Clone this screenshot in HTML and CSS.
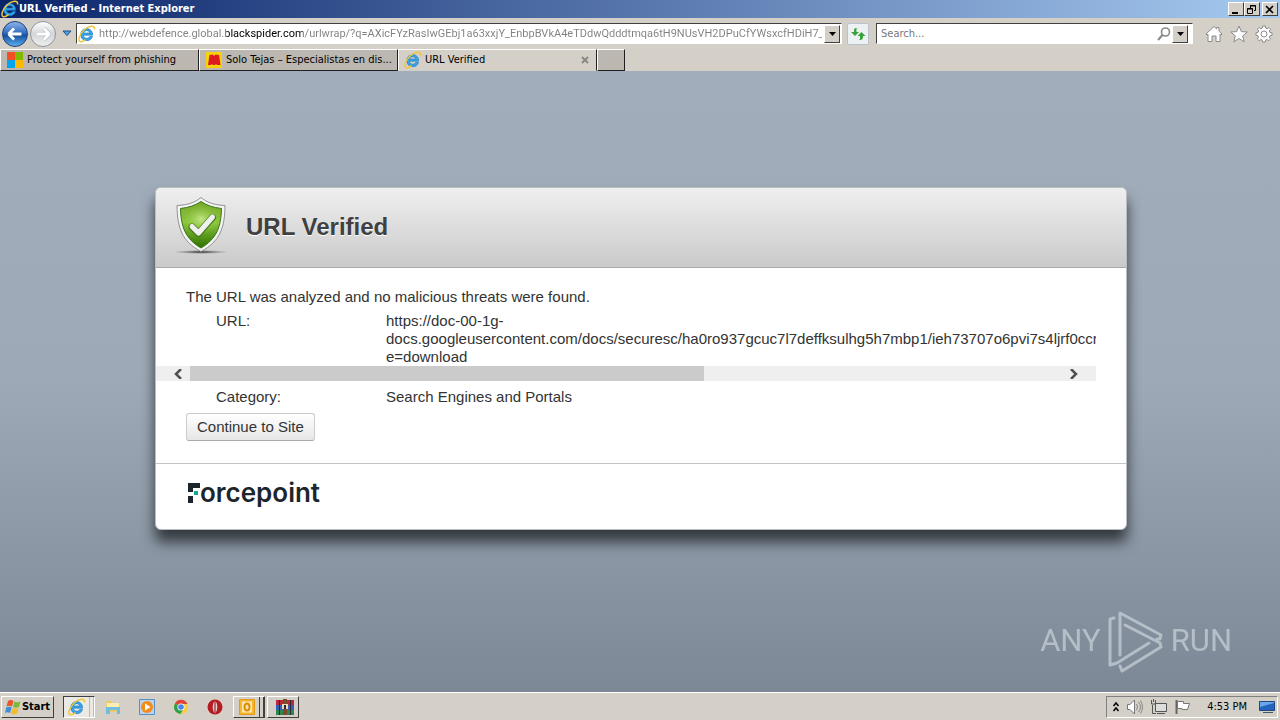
FILE: index.html
```html
<!DOCTYPE html>
<html lang="en">
<head>
    <meta charset="UTF-8">
    <title>URL Verified</title>
    <link rel="stylesheet" href="styles.css">
</head>
<body>
    <!-- shared icon -->
    <svg class="defs" width="0" height="0">
        <symbol id="ie" viewBox="0 0 18 18">
            <path d="M14.6 10.2H5.4c.2 3.5 5.2 4 6.2 1.3h2.9c-1.2 6-11.7 5.6-11.8-1.8C2.700 1.500 14.900 1.400 14.600 10.200zM5.600 8h6.200C11.500 4.900 6 4.900 5.600 8z" fill="#35a5e8" stroke="#1676c0" stroke-width=".6"/>
            <path d="M16.500 4.500C17.500-.5 10.500.5 6 5 1.500 9.300-.4 15.500 2 16.600c1.500.6 4-.8 5.500-2" fill="none" stroke="#f0c63c" stroke-width="1.500"/>
        </symbol>
    </svg>

    <div class="titlebar">
        <svg class="icon"><use href="#ie"/></svg>
        <span class="window-title">URL Verified - Internet Explorer</span>
        <div class="window-buttons">
            <button aria-label="Minimize"><svg width="10" height="9"><path d="M1 7h6v2H1z"/></svg></button>
            <button aria-label="Restore"><svg width="10" height="9"><path d="M3.500 3V.5h5v5H7M3 1h6M.5 3.500h5v5h-5zM0 4h6" fill="none" stroke="#000"/></svg></button>
            <button class="close" aria-label="Close"><svg width="10" height="9"><path d="M1 1l7 7M8 1L1 8" stroke="#000" stroke-width="1.600"/></svg></button>
        </div>
    </div>

    <div class="navbar">
        <button class="round back" aria-label="Back"><svg viewBox="0 0 26 26"><path d="M6 13l6-6M6 13l6 6M6 13h14" fill="none" stroke="#fff" stroke-width="3"/></svg></button>
        <button class="round forward" aria-label="Forward"><svg viewBox="0 0 26 26"><path d="M20 13l-6-6M20 13l-6 6M20 13H6" fill="none" stroke="#b5b9bf" stroke-width="4.500"/><path d="M20 13l-6-6M20 13l-6 6M20 13H6" fill="none" stroke="#fff" stroke-width="3"/></svg></button>
        <button class="recent" aria-label="Recent pages"><svg width="10" height="7"><path d="M1 1h8L5 5.500z" fill="#4aa3e0" stroke="#1d4f86"/></svg></button>
        <div class="field address">
            <svg class="icon"><use href="#ie"/></svg>
            <input class="url" type="text" aria-label="Address" value="http://webdefence.global.blackspider.com/urlwrap/?q=AXicFYzRasIwGEbj1a63xxjY_EnbpBVkA4eTDdwQdddtmqa6tH9NUsVH2DPuCfYWsxcfHDiH7_6O_">
            <button class="drop" aria-label="Show history"><svg width="7" height="4"><path d="M0 0h7L3.500 4z"/></svg></button>
        </div>
        <button class="refresh" aria-label="Refresh"><svg width="16" height="16"><path d="M7 2c-3 0-3 1-3 4H1l4 4 4-4H6.500C6.500 4 6 3 7 2zM9 14c3.500 0 4-1 4-4h2.500L11.500 6 7.500 10H10c0 2 .5 3-1 4z" fill="#37a33b"/></svg></button>
        <div class="field search">
            <input type="text" aria-label="Search" placeholder="Search...">
            <button class="lens" aria-label="Go"><svg width="14" height="14"><circle cx="8.500" cy="5" r="4" fill="none" stroke="#888" stroke-width="1.600"/><path d="M5.500 8L1 13" stroke="#888" stroke-width="2"/></svg></button>
            <button class="drop" aria-label="Search options"><svg width="7" height="4"><path d="M0 0h7L3.500 4z"/></svg></button>
        </div>
        <div class="tools">
            <button aria-label="Home"><svg viewBox="0 0 18 18"><path d="M1 9l8-7.500 2.500 2.400V2.500H14v3.700L17 9l-1 1-1-.8V16.500h-4V11H7v5.500H3V9.200L2 10z"/></svg></button>
            <button aria-label="Favorites"><svg viewBox="0 0 18 18"><path d="M9 1l2.300 5.600 6 .4-4.600 3.900 1.500 5.900L9 13.500l-5.200 3.300 1.500-5.900L.7 7l6-.4z"/></svg></button>
            <button aria-label="Tools"><svg viewBox="0 0 18 18"><path d="M7.600 1h2.800l.4 2.200 1.300.5L14 2.500l1.600 1.600-1.300 1.800.6 1.500L17 7.700v2.600l-2.100.5-.6 1.400 1.200 1.800-1.700 1.700-1.800-1.200-1.400.6-.4 2.100H7.700l-.4-2.100-1.400-.6-1.800 1.200-1.700-1.700 1.200-1.800-.6-1.400L1 10.300V7.700l2.100-.4.6-1.400-1.200-1.800 1.600-1.600 1.800 1.200 1.300-.5z"/><circle cx="9" cy="9" r="3"/></svg></button>
        </div>
    </div>

    <div class="tabs">
        <button class="tab">
            <svg class="icon" viewBox="0 0 18 18"><path d="M1 1h8v8H1z" fill="#f25022"/><path d="M9 1h8v8H9z" fill="#7fba00"/><path d="M1 9h8v8H1z" fill="#00a4ef"/><path d="M9 9h8v8H9z" fill="#ffb900"/></svg>
            <span>Protect yourself from phishing</span>
        </button>
        <button class="tab">
            <svg class="icon" viewBox="0 0 18 18"><path d="M1 1h16v16H1z" fill="#f5d20c"/><path d="M3 14L4.500 4 8 3.500 9 5l1.500-1.500L14 4l1.500 10H12l-1-1-1 1H8l-1-1-1 1z" fill="#dc1c20"/></svg>
            <span>Solo Tejas – Especialistas en dis...</span>
        </button>
        <button class="tab active">
            <svg class="icon"><use href="#ie"/></svg>
            <span>URL Verified</span>
            <svg class="tab-close" width="8" height="8"><path d="M1 1l6 6M7 1L1 7" stroke="#8b8782" stroke-width="2"/></svg>
        </button>
        <button class="new-tab" aria-label="New tab"></button>
    </div>

    <main class="page">
        <div class="card">
            <div class="card-header">
                <svg class="shield" viewBox="0 0 60 60">
                    <defs>
                        <linearGradient id="green" x1="0" y1="0" x2="0" y2="1">
                            <stop offset="0" stop-color="#76a72c"/>
                            <stop offset=".45" stop-color="#8cc63c"/>
                            <stop offset="1" stop-color="#2e7000"/>
                        </linearGradient>
                        <radialGradient id="glow"><stop offset="0" stop-color="#d2ee9a" stop-opacity=".8"/><stop offset="1" stop-color="#8cc63c" stop-opacity="0"/></radialGradient>
                        <radialGradient id="ground"><stop offset="0" stop-color="#222"/><stop offset="1" stop-color="#777" stop-opacity="0"/></radialGradient>
                    </defs>
                    <ellipse cx="30" cy="55" rx="28" ry="2" fill="url(#ground)"/>
                    <path d="M30 .5c6 5 13 7.500 24 8-.2 22-5 36-24 46C11 44.500 6.200 30.500 6 8.500c11-.5 18-3 24-8z" fill="#f4f4f4" stroke="#919191"/>
                    <path d="M30 4.500c6 4 12 6 20.500 7C50 30 45.500 42 30 51 14.500 42 10 30 9.500 11.500 18 10.500 24 8.500 30 4.500z" fill="url(#green)" stroke="#397416"/>
                    <ellipse cx="30" cy="22" rx="18" ry="15" fill="url(#glow)"/>
                    <path d="M21 30l6.500 6.500L41.500 20.500" fill="none" stroke="#467d1e" stroke-width="7" stroke-linecap="round" stroke-linejoin="round"/>
                    <path d="M21 29.500l6.500 6.500L41.500 20" fill="none" stroke="#f0f0f0" stroke-width="5" stroke-linecap="round" stroke-linejoin="round"/>
                </svg>
                <h1>URL Verified</h1>
            </div>
            <div class="card-body">
                <p>The URL was analyzed and no malicious threats were found.</p>
                <dl class="row url-row">
                    <dt>URL:</dt>
                    <dd>https://doc-00-1g-<br>docs.googleusercontent.com/docs/securesc/ha0ro937gcuc7l7deffksulhg5h7mbp1/ieh73707o6pvi7s4ljrf0ccr<br>e=download</dd>
                </dl>
                <div class="scrollbar">
                    <button aria-label="Scroll left"><svg width="10" height="10"><path d="M8 0L3 5l5 5" fill="none" stroke="#505050" stroke-width="2.500"/></svg></button>
                    <div class="track"><div class="thumb"></div></div>
                    <button aria-label="Scroll right"><svg width="10" height="10"><path d="M2 0l5 5-5 5" fill="none" stroke="#505050" stroke-width="2.500"/></svg></button>
                </div>
                <dl class="row">
                    <dt>Category:</dt>
                    <dd>Search Engines and Portals</dd>
                </dl>
                <button class="continue">Continue to Site</button>
            </div>
            <div class="card-footer">
                <div class="brand">
                    <svg width="12" height="20"><path d="M0 0h13v5H5v4H0zM0 13h5v7H0z" fill="#1d252c"/><path d="M6 8h4v4H6z" fill="#14a890"/></svg>
                    <span>orcepoint</span>
                </div>
            </div>
        </div>

        <div class="watermark">
            <span>ANY</span>
            <svg viewBox="0 0 58 64" width="58" height="64">
                <path d="M7 9l-4 1v46l7-2 32-20M13 46V4l41 22-1 4h-3M13 57l2 5 39-24-1-4-35-18" fill="none" stroke="#c3cad3" stroke-width="3" stroke-linejoin="round" stroke-linecap="round"/>
            </svg>
            <span>RUN</span>
        </div>
    </main>

    <div class="taskbar">
        <button class="start">
            <svg width="17" height="16"><path d="M3 2c2-1.500 4-1 5.500 0L7 7.500C5 6.500 3.500 6.500 1.500 7.500z" fill="#e8562a"/><path d="M9.500 2.500c2 1 4 1 6 0L14 8c-2 1-4 1-6 0z" fill="#7db83a"/><path d="M1.200 8.500c2-1 3.800-1 5.500 0L5 14c-2-1-3.500-1-5 0z" fill="#3b8ed8"/><path d="M7.700 9c2 1 4 1 6 0L12 14.500c-2 1-4 1-6 0z" fill="#f4bc2c"/></svg>
            Start
        </button>
        <button class="task pressed" aria-label="Internet Explorer"><svg class="icon"><use href="#ie"/></svg><i></i><i></i></button>
        <button class="quick" aria-label="Explorer"><svg viewBox="0 0 18 18"><path d="M2 3h5l1 2h7v9H2z" fill="#e9c968"/><path d="M3 5h12v7H3z" fill="#fbeeb0"/><path d="M2 9h14v7h-3v-4H6v4H2z" fill="#72bce0"/></svg></button>
        <button class="quick" aria-label="Media Player"><svg viewBox="0 0 18 18"><path d="M1.500 1.500h15v15h-15z" fill="#b8d4ee" stroke="#588fc6"/><circle cx="9" cy="9" r="6" fill="#f28c1c"/><path d="M7 5.500L12.500 9 7 12.500z" fill="#fff"/></svg></button>
        <button class="quick" aria-label="Chrome"><svg viewBox="0 0 18 18"><circle cx="9" cy="9" r="7" fill="#f9cd3c"/><path d="M9 9L2.900 5.500A7 7 0 0 1 15.500 6H9z" fill="#e04438"/><path d="M9 9L3 5.400A7 7 0 0 0 8.500 16L11.500 11z" fill="#2da04f"/><circle cx="9" cy="9" r="3.600" fill="#fff"/><circle cx="9" cy="9" r="2.800" fill="#4486ee"/></svg></button>
        <button class="quick" aria-label="Opera"><svg viewBox="0 0 18 18"><circle cx="9" cy="9" r="7.500" fill="#b71a20"/><ellipse cx="9" cy="9" rx="2.300" ry="5.500" fill="#e5cfcc"/><path d="M8.500 4h1v10h-1z" fill="#811015"/></svg></button>
        <button class="task outlook" aria-label="Outlook"><svg class="icon" viewBox="0 0 18 18"><path d="M1.500 1.500h15v15h-15z" fill="#f5b52c" stroke="#e29a17"/><path d="M4 3.500h10v11H4z" fill="#fbe9b3"/><ellipse cx="9" cy="9" rx="2.500" ry="3.500" fill="none" stroke="#e08c00" stroke-width="2"/></svg><i></i><i></i></button>
        <button class="task" aria-label="WinRAR"><svg class="icon" viewBox="0 0 18 18"><path d="M0 2h18v5H0z" fill="#b52a3a"/><path d="M0 7h18v5H0z" fill="#365fb0"/><path d="M0 12h18v5H0z" fill="#2f8651"/><path d="M7 1h4v16H7z" fill="#7c4b2a"/><path d="M6 6h6v5H6z" fill="#e6ddbd"/><path d="M8 7h2v4H8zM3 2h1v15H3zM14 2h1v15h-1z" fill="#30263a"/></svg></button>
        <div class="tray">
            <svg width="8" height="12"><path d="M1.500 5L4 2l2.500 3M1.500 10L4 7l2.500 3" fill="none" stroke="#000" stroke-width="1.500"/></svg>
            <svg width="18" height="16"><path d="M1.500 5.500H4L8.500 1v14L4 10.500H1.500z" fill="#fff" stroke="#777"/><path d="M10.500 5q2 3 0 6M12.500 3q4 5 0 10M14.500 1.500q4 6.500 0 13" fill="none" stroke="#888"/></svg>
            <svg width="18" height="16"><path d="M5.500 4.500h11v8h-11z" fill="#ddd" stroke="#555"/><path d="M7 14.500h8M2.500 6v8.500H6M1.500 1v4h4V1M3.500 0v3" fill="none" stroke="#555"/></svg>
            <svg width="18" height="16"><path d="M2.500 1v14" stroke="#666" stroke-width="2"/><path d="M3.500 2.500h6v2h6l-2 6H8v-1H3.500z" fill="#fff" stroke="#777"/></svg>
            <time>4:53 PM</time>
            <svg width="16" height="14"><path d="M.5 1.500h15v9H.5z" fill="#2563bd" stroke="#214780"/><path d="M1 7l14-4V2H1z" fill="#69a7e8"/><path d="M4 12h10v1H4z" fill="#456"/></svg>
        </div>
    </div>
</body>
</html>
```

FILE: styles.css
```css
* {
    box-sizing: border-box;
}
body {
    margin: 0;
    height: 100vh;
    display: flex;
    flex-direction: column;
    overflow: hidden;
    background: #d4d0c8;
    color: #000;
    font: 11px/14px "DejaVu Sans Condensed", "DejaVu Sans", sans-serif;
}
button, input {
    font: inherit;
    color: inherit;
    margin: 0;
    padding: 0;
    border: none;
    background: none;
}
button {
    display: flex;
    align-items: center;
    justify-content: center;
    flex-shrink: 0;
    white-space: nowrap;
}
svg {
    flex-shrink: 0;
}
.defs {
    position: absolute;
}
.icon {
    width: 18px;
    height: 18px;
}

/* title bar */
.titlebar {
    display: flex;
    align-items: center;
    height: 18px;
    flex-shrink: 0;
    padding: 0 2px 0 1px;
    background: linear-gradient(90deg, #0a246a, #a6caf0);
    color: #fff;
    font-weight: bold;
}
.window-title {
    flex: 1;
}
.window-buttons {
    display: flex;
}
.window-buttons button {
    width: 16px;
    height: 14px;
    background: #d4d0c8;
    border: 1px solid;
    border-color: #fff #404040 #404040 #fff;
}
.window-buttons .close {
    margin-left: 2px;
}

/* navigation */
.navbar {
    display: flex;
    align-items: center;
    height: 30px;
    flex-shrink: 0;
    padding: 0 7px 0 2px;
    border-top: 1px solid #d4d0c8;
}
.round {
    width: 26px;
    height: 26px;
    border-radius: 50%;
    margin-right: 2px;
    border: 1px solid #8f969f;
    background: linear-gradient(#fff, #d3d6da 50%, #eee);
}
.back {
    border-color: #1d3f75;
    background: linear-gradient(#8bb4e8, #2a66bd 50%, #174d9f 55%, #58b0ec);
}
.recent {
    width: 18px;
    height: 20px;
}
.field {
    display: flex;
    align-items: center;
    height: 21px;
    background: #fff;
    border: 1px solid;
    border-color: #404040 #fff #fff #404040;
}
.field input {
    flex: 1;
    min-width: 0;
    outline: none;
}
.address {
    flex: 5 1 766px;
    padding: 0 1px;
}
/* the domain stands out from the rest of the address */
.field .url {
    margin: 0 2px 0 3px;
    color: transparent;
    font-family: Roboto, sans-serif;
    background: linear-gradient(90deg, #808080 127px, #000 127px, #000 204px, #808080 204px);
    -webkit-background-clip: text;
    background-clip: text;
}
.drop {
    width: 16px;
    height: 18px;
    background: #d4d0c8;
    border: 1px solid;
    border-color: #fff #404040 #404040 #fff;
}
.refresh {
    width: 22px;
    height: 22px;
    margin: 0 7px 0 5px;
    background: #eef1f3;
    border: 1px solid #b8c3cc;
    border-radius: 2px;
}
.search {
    flex: 2 1 317px;
    padding: 0 4px;
}
.search input::placeholder {
    color: #777;
    opacity: 1;
}
.lens {
    width: 16px;
}
.tools {
    display: flex;
    gap: 7px;
    margin-left: 12px;
}
.tools svg {
    width: 18px;
    height: 18px;
    fill: #fff;
    stroke: #8c8c8c;
}

/* tabs */
.tabs {
    display: flex;
    align-items: flex-end;
    height: 23px;
    flex-shrink: 0;
}
.tab {
    width: 199px;
    height: 22px;
    justify-content: flex-start;
    gap: 3px;
    padding: 0 0 0 5px;
    background: #bcb7b0;
    border: 1px solid;
    border-color: #fff #202020 #202020 #fff;
}
.tab.active {
    padding-right: 7px;
    background: #d4d0c8;
    border-color: #fff #202020 #d4d0c8 #fff;
}
.tab-close {
    margin-left: auto;
}
.new-tab {
    width: 28px;
    height: 22px;
    background: #bcb7b0;
    border: 1px solid;
    border-color: #fff #202020 #202020 #fff;
}

/* page */
.page {
    position: relative;
    flex: 1;
    min-height: 0;
    padding: 116px 16px 0 18px;
    background: linear-gradient(#a1adbb, #9da9b7 50%, #7c8895);
    color: #333;
    font: 15px/18px "Liberation Sans", Arial, sans-serif;
}
.card {
    max-width: 972px;
    margin: 0 auto;
    background: #fff;
    border: 1px solid #b9bec4;
    border-radius: 6px;
    box-shadow: 0 12px 14px #34393f;
}
.card-header {
    display: flex;
    align-items: center;
    height: 80px;
    padding: 0 0 2px 15px;
    gap: 15px;
    border-bottom: 1px solid #a9a9a9;
    border-radius: 5px 5px 0 0;
    background: linear-gradient(#efefef, #cacaca);
}
.shield {
    width: 60px;
    height: 60px;
}
h1 {
    margin: 0;
    font-size: 24px;
    line-height: 28px;
    color: #404040;
    text-shadow: 0 1px 0 #fff;
}
.card-body {
    padding: 20px 30px 22px 0;
}
.card-body p {
    margin: 0 0 6px 30px;
}
.row {
    display: flex;
    margin: 7px 0;
    padding-left: 60px;
    overflow: hidden;
}
.url-row {
    margin: 0;
}
.row dt {
    width: 170px;
    flex-shrink: 0;
}
.row dd {
    margin: 0;
}
.scrollbar {
    display: flex;
    height: 15px;
    background: #efefef;
}
.scrollbar button {
    width: 14px;
    margin: 0 15px 0 5px;
}
.scrollbar button:first-child {
    margin: 0 5px 0 15px;
}
.track {
    flex: 1;
}
.thumb {
    width: 59%;
    height: 100%;
    background: #cbcbcb;
}
.continue {
    height: 28px;
    margin-left: 30px;
    padding: 0 10px;
    border: 1px solid #ccc;
    border-bottom-color: #aaa;
    border-radius: 3px;
    background: linear-gradient(#fff, #e6e6e6);
}
.card-footer {
    height: 66px;
    padding: 15px 32px;
    border-top: 1px solid #c4c4c4;
}
.brand {
    display: flex;
    align-items: center;
    color: #1d252c;
    font: 600 26px/28px Inter, sans-serif;
}
.watermark {
    position: absolute;
    right: 48px;
    bottom: 19px;
    display: flex;
    align-items: center;
    gap: 6px;
    color: #c3cad3;
    font: 31px/64px Roboto, sans-serif;
    opacity: .8;
}

/* taskbar */
.taskbar {
    display: flex;
    align-items: center;
    height: 28px;
    flex-shrink: 0;
    padding: 1px 2px 0 1px;
    border-top: 1px solid #fff;
}
.start {
    width: 53px;
    height: 22px;
    margin-right: 9px;
    font-weight: bold;
    border: 1px solid;
    border-color: #fff #404040 #404040 #fff;
}
.task {
    height: 22px;
    min-width: 32px;
    padding-left: 3px;
    gap: 2px;
    border: 1px solid;
    border-color: #fff #404040 #404040 #fff;
}
.task i {
    width: 2px;
    height: 20px;
    border-right: 1px solid #404040;
}
.pressed {
    background: #ebe9e4;
    border-color: #404040 #fff #fff #404040;
    margin-right: 1px;
}
.pressed i {
    border-color: #bbb;
}
.outlook {
    margin: 0 2px 0 1px;
}
.quick {
    width: 34px;
}
.quick svg {
    width: 18px;
    height: 18px;
}
.tray {
    display: flex;
    align-items: center;
    gap: 6px;
    height: 22px;
    margin-left: auto;
    padding: 0 2px 0 5px;
    border: 1px solid;
    border-color: #808080 #fff #fff #808080;
}
.tray time {
    margin: 0 6px 0 9px;
}
```
